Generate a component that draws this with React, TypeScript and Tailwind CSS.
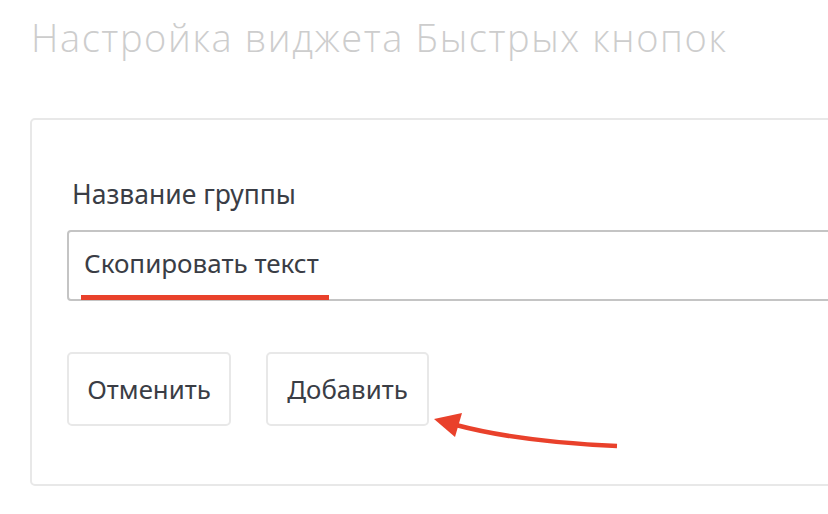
import React from 'react';

export default function App() {
  return (
    <div className="relative w-[828px] h-[514px] overflow-hidden bg-white" style={{ fontFamily: '"Noto Sans", "Open Sans", sans-serif' }}>
      <h1 className="pl-[31px] pt-[12px] text-[38px] leading-[50px] font-light tracking-[1.6px] text-[#cdcdcd] whitespace-nowrap" style={{ fontFamily: '"Open Sans", sans-serif' }}>
        Настройка виджета Быстрых кнопок
      </h1>

      <div className="ml-[30px] mt-[56px] w-[900px] rounded-[5px] border-2 border-[#e8e8e8] pl-[35px] pt-[58px] pb-[58px]">
        <label className="block pl-[5px] text-[26.5px] leading-[32px] text-[#3a3d45]">Название группы</label>

        <div className="relative mt-[20px] h-[71px] rounded-[4px] border-2 border-[#c4c4c4] flex items-center pl-[15px] pb-[4px]">
          <span className="text-[26px] text-[#3a3d45]">Скопировать текст</span>
          <span className="absolute left-[12px] bottom-[-1px] h-[5px] w-[248px] bg-[#e9412b]" />
        </div>

        <div className="mt-[51px] flex gap-[35px]">
          <button className="h-[74px] w-[164px] rounded-[5px] border-2 border-[#e8e8e8] text-[25.8px] text-[#3a3d45]">Отменить</button>
          <button className="h-[74px] w-[163px] rounded-[5px] border-2 border-[#e8e8e8] text-[25.8px] text-[#3a3d45]">Добавить</button>
        </div>
      </div>

      <svg className="absolute left-0 top-0" width="828" height="514" viewBox="0 0 828 514">
        <path d="M617 446 Q520 442 456 425" fill="none" stroke="#e9412b" strokeWidth="4.5" />
        <polygon points="434,419 462,413 455,437" fill="#e9412b" />
      </svg>
    </div>
  );
}
